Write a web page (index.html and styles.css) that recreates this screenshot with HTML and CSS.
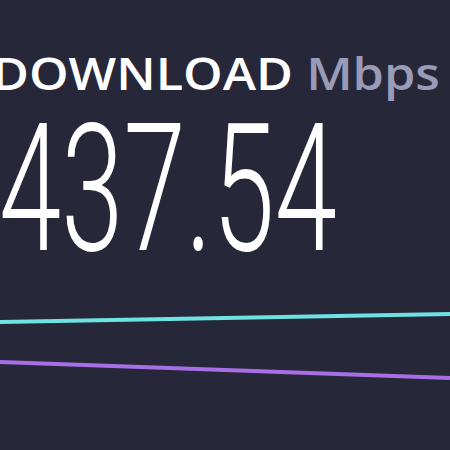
FILE: index.html
```html
<!DOCTYPE html>
<html lang="en">
<head>
  <meta charset="UTF-8" />
  <title>Speed Test</title>
  <link rel="stylesheet" href="styles.css">
</head>
<body>

  <div class="result">
    <h2 class="label">DOWNLOAD <span class="unit">Mbps</span></h2>
    <div class="value">437.54</div>
  </div>

  <!-- speed graph lines -->
  <svg class="graph" width="450" height="100" viewBox="0 0 450 100">
    <line x1="0" y1="22" x2="450" y2="14" stroke="#6fe3e3" stroke-width="4" />
    <line x1="0" y1="62" x2="450" y2="78" stroke="#a86ee6" stroke-width="4" />
  </svg>

</body>
</html>
```

FILE: styles.css
```css
body {
  margin: 0;
  width: 450px;
  height: 450px;
  overflow: hidden;
  background-color: #26283a;
  font-family: "Open Sans", sans-serif;
}
.result {
  padding-top: 48px;
}
.label {
  margin: 0 0 0 -8px;
  font-size: 45px;
  font-weight: 600;
  line-height: 50px;
  color: #ffffff;
  white-space: nowrap;
  transform: scaleX(1.12);
  transform-origin: left center;
}
.unit {
  color: #9a9bb6;
}
.value {
  margin-top: 11px;
  margin-left: -1px;
  font-family: Roboto, sans-serif;
  font-weight: 300;
  font-size: 178px;
  line-height: 160px;
  color: #ffffff;
  transform: scaleX(0.63);
  transform-origin: left center;
  white-space: nowrap;
}
.graph {
  display: block;
  margin-top: 31px;
}
```
